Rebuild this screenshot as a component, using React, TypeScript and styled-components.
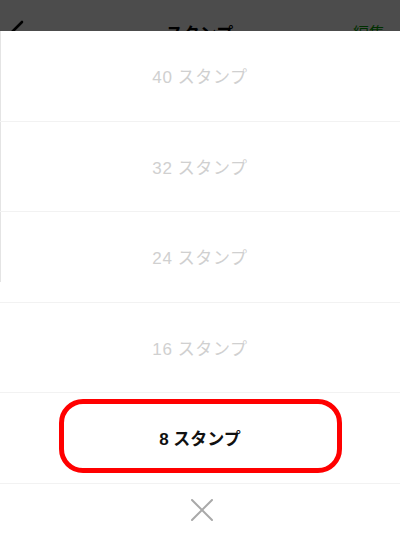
import styled, { createGlobalStyle } from "styled-components";

const GlobalStyle = createGlobalStyle`
  html, body {
    margin: 0;
    padding: 0;
    background: #ffffff;
  }
  body {
    font-family: "Noto Sans CJK JP", "Noto Sans", sans-serif;
  }
`;

const Screen = styled.div`
  position: relative;
  width: 400px;
  height: 537px;
  overflow: hidden;
  background: #ffffff;
`;

const NavBar = styled.div`
  height: 64px;
  display: flex;
  align-items: center;
  justify-content: space-between;
  padding: 0 15px 0 10px;
  box-sizing: border-box;
  background: #ffffff;
`;

const BackButton = styled.svg`
  width: 14px;
  height: 24px;
`;

const NavTitle = styled.div`
  font-size: 17px;
  font-weight: bold;
  color: #000000;
  margin-left: 22px;
`;

const NavAction = styled.div`
  font-size: 16px;
  color: #00a000;
`;

const Backdrop = styled.div`
  position: absolute;
  inset: 0;
  background: rgba(0, 0, 0, 0.7);
`;

const Sheet = styled.div`
  position: absolute;
  top: 31px;
  left: 0;
  right: 0;
  bottom: 0;
  display: flex;
  flex-direction: column;
  background: #ffffff;

  &::before {
    content: "";
    position: absolute;
    top: 0;
    left: 0;
    width: 1px;
    height: 251px;
    background: #e4e4e4;
  }
`;

const Option = styled.div<{ $active?: boolean }>`
  position: relative;
  height: 90.5px;
  flex-shrink: 0;
  box-sizing: border-box;
  border-bottom: 1px solid #f2f2f2;
  display: flex;
  align-items: center;
  justify-content: center;
  font-family: "Liberation Sans", "Noto Sans CJK JP", sans-serif;
  font-size: 17px;
  font-weight: ${(p) => (p.$active ? "bold" : "normal")};
  letter-spacing: ${(p) => (p.$active ? "0" : "0.6px")};
  color: ${(p) => (p.$active ? "#111111" : "#d0d0d0")};
`;

const Highlight = styled.div`
  position: absolute;
  top: 6px;
  bottom: 10px;
  left: 59px;
  right: 58px;
  border: 5px solid #ff0000;
  border-radius: 24px;
`;

const CancelRow = styled.div`
  flex: 1;
  display: flex;
  align-items: center;
  justify-content: center;
  padding-left: 4px;
`;

const CloseIcon = styled.svg`
  width: 22px;
  height: 22px;
`;

const options = [40, 32, 24, 16, 8];
const selected = 8;

const App = () => {
  return (
    <Screen>
      <GlobalStyle />
      <NavBar>
        <BackButton viewBox="0 0 14 24">
          <polyline
            points="12,2 2,12 12,22"
            fill="none"
            stroke="#000"
            strokeWidth={2.6}
            strokeLinecap="round"
            strokeLinejoin="round"
          />
        </BackButton>
        <NavTitle>スタンプ</NavTitle>
        <NavAction>編集</NavAction>
      </NavBar>
      <Backdrop />
      <Sheet>
        {options.map((n) => (
          <Option key={n} $active={n === selected}>
            {n === selected && <Highlight />}
            {n} スタンプ
          </Option>
        ))}
        <CancelRow>
          <CloseIcon viewBox="0 0 22 22">
            <path
              d="M1 1 L21 21 M21 1 L1 21"
              stroke="#a9a9a9"
              strokeWidth={2}
              strokeLinecap="round"
            />
          </CloseIcon>
        </CancelRow>
      </Sheet>
    </Screen>
  );
};

export default App;
